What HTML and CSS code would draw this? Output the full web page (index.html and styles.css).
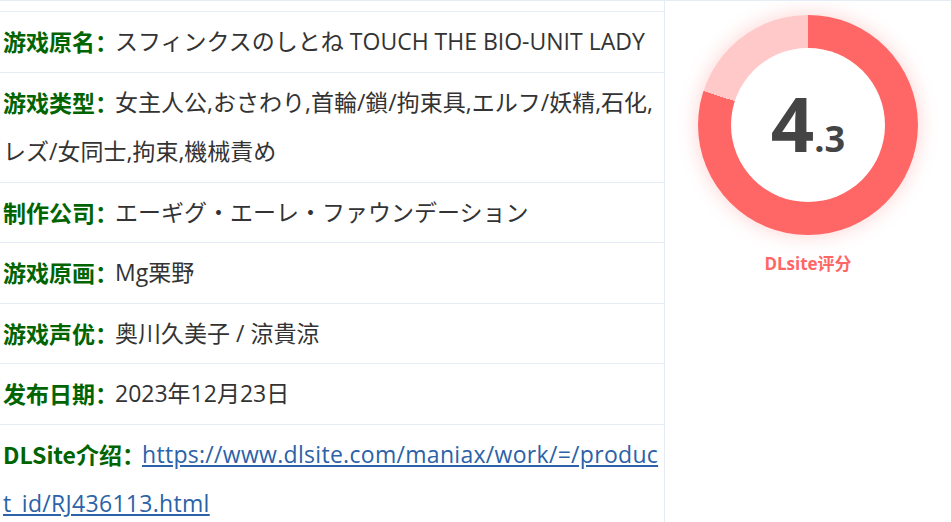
FILE: index.html
```html
<!DOCTYPE html>
<html lang="zh">
<head>
<meta charset="utf-8">
<link rel="stylesheet" href="styles.css">
</head>
<body>
<div class="page">
  <div class="info">
    <div class="row spacer"></div>
    <div class="row"><span class="label">游戏原名：</span><span class="value">スフィンクスのしとね TOUCH THE BIO-UNIT LADY</span></div>
    <div class="row"><span class="label">游戏类型：</span><span class="value">女主人公,おさわり,首輪/鎖/拘束具,エルフ/妖精,石化,レズ/女同士,拘束,機械責め</span></div>
    <div class="row"><span class="label">制作公司：</span><span class="value">エーギグ・エーレ・ファウンデーション</span></div>
    <div class="row"><span class="label">游戏原画：</span><span class="value">Mg栗野</span></div>
    <div class="row"><span class="label">游戏声优：</span><span class="value">奥川久美子 / 涼貴涼</span></div>
    <div class="row"><span class="label">发布日期：</span><span class="value">2023年12月23日</span></div>
    <div class="row last"><span class="label">DLSite介绍：</span><a class="link" href="#">https://www.dlsite.com/maniax/work/=/product_id/RJ436113.html</a></div>
  </div>
  <div class="score">
    <div class="donut">
      <div class="hole"><span class="big">4</span><span class="small">.3</span></div>
    </div>
    <div class="score-label">DLsite评分</div>
  </div>
</div>
</body>
</html>
```

FILE: styles.css
```css
html, body {
  margin: 0;
  padding: 0;
  background: #fff;
}
.page {
  display: flex;
  width: 951px;
  height: 522px;
  overflow: hidden;
  border-top: 1px solid #e4edf6;
  box-sizing: border-box;
  font-family: "Open Sans", "Noto Sans CJK SC", sans-serif;
}
.info {
  width: 664px;
  flex: none;
  border-right: 1px solid #e4edf6;
}
.row {
  padding: 5px 0 5px 3px;
  border-bottom: 1px solid #e4edf6;
  font-size: 23px;
  line-height: 49.5px;
  color: #333;
}
.row.spacer {
  padding: 0;
  height: 10px;
}
.row.last {
  border-bottom: none;
}
.label,
.value,
.link {
  vertical-align: top;
  line-height: 49.5px;
}
.label {
  color: #006400;
  font-weight: bold;
  font-family: "Noto Sans CJK SC", sans-serif;
  margin-right: -3px;
}
.value {
  color: #333;
}
.link {
  color: #2b62a8;
  text-decoration: underline;
  word-break: break-all;
  letter-spacing: 0.3px;
}
.score {
  flex: 1;
  display: flex;
  flex-direction: column;
  align-items: center;
  padding-top: 14px;
}
.donut {
  width: 220px;
  height: 220px;
  border-radius: 50%;
  background: conic-gradient(#ff6666 0deg 288deg, #ffc9c9 288deg 360deg);
  box-shadow: 0 0 20px rgba(255, 102, 102, 0.3);
  display: flex;
  align-items: center;
  justify-content: center;
}
.hole {
  width: 154px;
  height: 154px;
  border-radius: 50%;
  background: #fff;
  display: flex;
  align-items: baseline;
  justify-content: center;
  color: #444;
  font-weight: bold;
  font-family: "Open Sans", sans-serif;
  line-height: 150px;
}
.big {
  font-size: 76px;
}
.small {
  font-size: 36px;
}
.score-label {
  margin-top: 15px;
  color: #ff6666;
  font-weight: bold;
  font-size: 17px;
  font-family: "Open Sans", "Noto Sans CJK SC", sans-serif;
}
```
